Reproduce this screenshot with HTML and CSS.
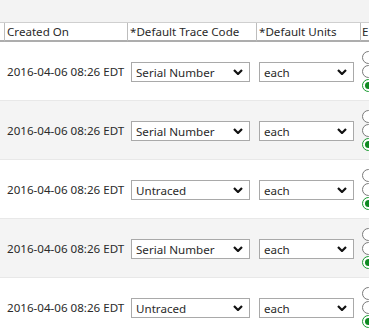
FILE: index.html
```html
<!DOCTYPE html>
<html>
<head>
<meta charset="utf-8">
<link rel="stylesheet" href="styles.css">
</head>
<body>
<div class="toolbar"></div>
<div class="grid">
  <div class="hrow">
    <div class="hc c0"></div>
    <div class="hc c1">Created On</div>
    <div class="hc c2">*Default Trace Code</div>
    <div class="hc c3">*Default Units</div>
    <div class="hc c4">E</div>
  </div>

  <div class="row">
    <div class="c0"></div>
    <div class="c1 date">2016-04-06 08:26 EDT</div>
    <div class="c2"><div class="sel trace"><span>Serial Number</span><svg class="chev" width="10" height="6" viewBox="0 0 10 6"><path d="M1 1 L5 5 L9 1" fill="none" stroke="#111" stroke-width="2.2"/></svg></div></div>
    <div class="c3"><div class="sel units"><span>each</span><svg class="chev" width="10" height="6" viewBox="0 0 10 6"><path d="M1 1 L5 5 L9 1" fill="none" stroke="#111" stroke-width="2.2"/></svg></div></div>
    <div class="c4 radios"><span class="radio"></span><span class="radio"></span><span class="radio on"></span></div>
  </div>

  <div class="row alt">
    <div class="c0"></div>
    <div class="c1 date">2016-04-06 08:26 EDT</div>
    <div class="c2"><div class="sel trace"><span>Serial Number</span><svg class="chev" width="10" height="6" viewBox="0 0 10 6"><path d="M1 1 L5 5 L9 1" fill="none" stroke="#111" stroke-width="2.2"/></svg></div></div>
    <div class="c3"><div class="sel units"><span>each</span><svg class="chev" width="10" height="6" viewBox="0 0 10 6"><path d="M1 1 L5 5 L9 1" fill="none" stroke="#111" stroke-width="2.2"/></svg></div></div>
    <div class="c4 radios"><span class="radio"></span><span class="radio"></span><span class="radio on"></span></div>
  </div>

  <div class="row">
    <div class="c0"></div>
    <div class="c1 date">2016-04-06 08:26 EDT</div>
    <div class="c2"><div class="sel trace"><span>Untraced</span><svg class="chev" width="10" height="6" viewBox="0 0 10 6"><path d="M1 1 L5 5 L9 1" fill="none" stroke="#111" stroke-width="2.2"/></svg></div></div>
    <div class="c3"><div class="sel units"><span>each</span><svg class="chev" width="10" height="6" viewBox="0 0 10 6"><path d="M1 1 L5 5 L9 1" fill="none" stroke="#111" stroke-width="2.2"/></svg></div></div>
    <div class="c4 radios"><span class="radio"></span><span class="radio"></span><span class="radio on"></span></div>
  </div>

  <div class="row alt">
    <div class="c0"></div>
    <div class="c1 date">2016-04-06 08:26 EDT</div>
    <div class="c2"><div class="sel trace"><span>Serial Number</span><svg class="chev" width="10" height="6" viewBox="0 0 10 6"><path d="M1 1 L5 5 L9 1" fill="none" stroke="#111" stroke-width="2.2"/></svg></div></div>
    <div class="c3"><div class="sel units"><span>each</span><svg class="chev" width="10" height="6" viewBox="0 0 10 6"><path d="M1 1 L5 5 L9 1" fill="none" stroke="#111" stroke-width="2.2"/></svg></div></div>
    <div class="c4 radios"><span class="radio"></span><span class="radio"></span><span class="radio on"></span></div>
  </div>

  <div class="row">
    <div class="c0"></div>
    <div class="c1 date">2016-04-06 08:26 EDT</div>
    <div class="c2"><div class="sel trace"><span>Untraced</span><svg class="chev" width="10" height="6" viewBox="0 0 10 6"><path d="M1 1 L5 5 L9 1" fill="none" stroke="#111" stroke-width="2.2"/></svg></div></div>
    <div class="c3"><div class="sel units"><span>each</span><svg class="chev" width="10" height="6" viewBox="0 0 10 6"><path d="M1 1 L5 5 L9 1" fill="none" stroke="#111" stroke-width="2.2"/></svg></div></div>
    <div class="c4 radios"><span class="radio"></span><span class="radio"></span><span class="radio on"></span></div>
  </div>
</div>
</body>
</html>
```

FILE: styles.css
```css
html, body {
  margin: 0;
  padding: 0;
  background: #ffffff;
  overflow: hidden;
}
body {
  font-family: "Noto Sans", "Open Sans", sans-serif;
  font-size: 11.6px;
  color: #2a2a2a;
  width: 369px;
  height: 335px;
}
.toolbar {
  height: 22px;
  background: #f3f3f3;
}
.grid {
  display: flex;
  flex-direction: column;
}
.hrow {
  display: flex;
  height: 19px;
  border-top: 1px solid #cfcfcf;
  background: #ffffff;
}
.hc {
  box-sizing: border-box;
  height: 19px;
  border-right: 1px solid #bdbdbd;
  border-bottom: 2px solid #adadad;
  padding-left: 2px;
  line-height: 17px;
  white-space: nowrap;
  overflow: hidden;
}
.c0 { width: 5px; flex: none; box-sizing: border-box; }
.c1 { width: 123px; flex: none; box-sizing: border-box; }
.c2 { width: 129px; flex: none; box-sizing: border-box; }
.c3 { width: 104px; flex: none; box-sizing: border-box; }
.c4 { flex: 1; box-sizing: border-box; }
.hc.c0 { padding: 0; }
.hc.c4 { border-right: none; padding-left: 1px; }

.row {
  display: flex;
  align-items: center;
  height: 59px;
  box-sizing: border-box;
  border-bottom: 1px solid #e8e8e8;
  background: #ffffff;
}
.row.alt { background: #f4f4f4; }
.date {
  padding-left: 2px;
  white-space: nowrap;
}
.sel {
  position: relative;
  display: flex;
  align-items: center;
  box-sizing: border-box;
  height: 20px;
  border: 1px solid #a9a9a9;
  background: #ffffff;
  padding-left: 4px;
  margin-top: 2px;
}
.sel.trace { width: 119px; margin-left: 3px; }
.sel.units { width: 95px; margin-left: 2px; }
.chev {
  position: absolute;
  right: 6px;
  top: 6px;
}
.radios {
  display: flex;
  flex-direction: column;
  padding-left: 1px;
  gap: 1px;
  padding-top: 1px;
}
.radio {
  display: block;
  box-sizing: border-box;
  width: 13px;
  height: 13px;
  border-radius: 50%;
  border: 1px solid #7a7a7a;
  background: #ffffff;
  position: relative;
}
.radio.on {
  border-color: #179a2e;
}
.radio.on::after {
  content: "";
  position: absolute;
  left: 2px;
  top: 2px;
  width: 7px;
  height: 7px;
  border-radius: 50%;
  background: #0f8a22;
}
```
